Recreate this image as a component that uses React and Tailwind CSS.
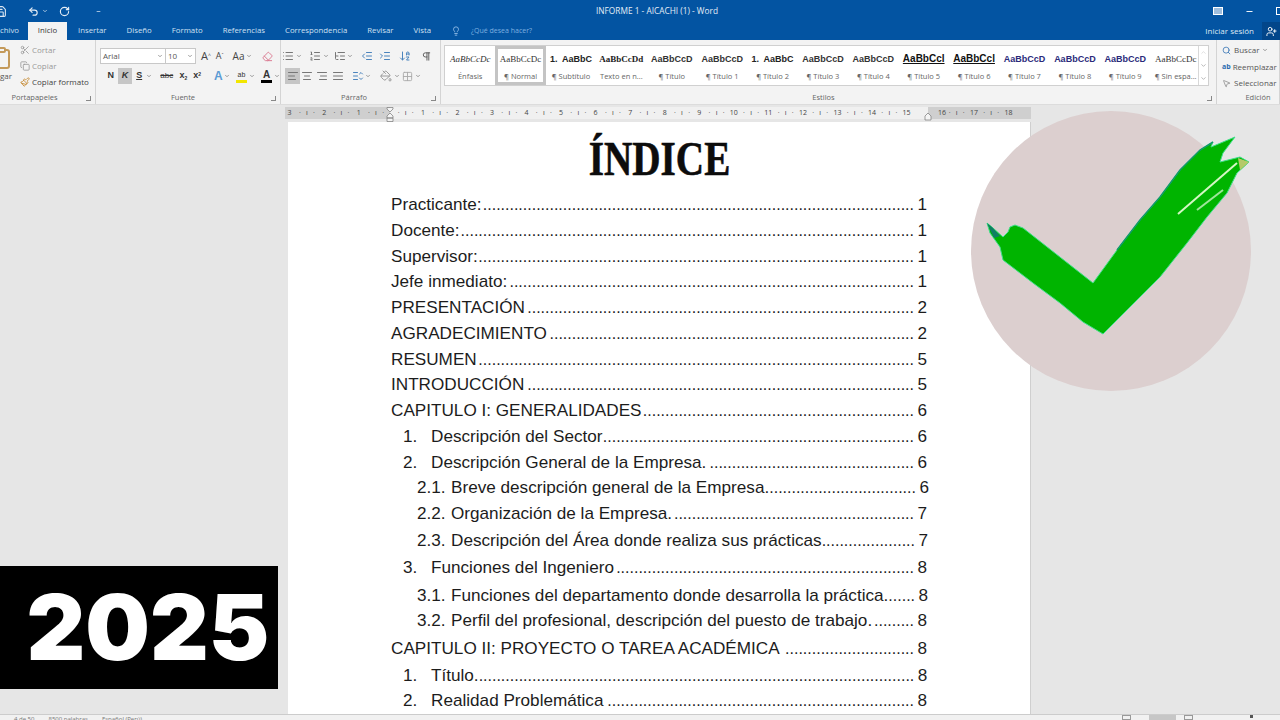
import React from 'react';
import {
  Scissors, Copy, Paintbrush, Clipboard, Undo2, RotateCw, List, ListOrdered, ListTree, IndentDecrease,
  IndentIncrease, ArrowDownAZ, Pilcrow, AlignLeft, AlignCenter, AlignRight, AlignJustify, Search,
  MousePointer2, Lightbulb, UserPlus, Eraser, PaintBucket, Grid2x2, ListChevronsUpDown, Save,
  ChevronDown, ChevronUp, Minus,
} from 'lucide-react';

const tabs = ['Insertar', 'Diseño', 'Formato', 'Referencias', 'Correspondencia', 'Revisar', 'Vista'];

const estilos = [
  { prev: 'AaBbCcDc', label: 'Énfasis', cls: 'italic font-["Liberation_Serif",serif] text-[#333]' },
  { prev: 'AaBbCcDc', label: '¶ Normal', cls: 'font-["Liberation_Serif",serif] text-[#333]', sel: true },
  { prev: '1.  AaBbC', label: '¶ Subtítulo', cls: 'font-bold text-[#222]' },
  { prev: 'AaBbCcDd', label: 'Texto en n...', cls: 'font-bold font-["Liberation_Serif",serif] text-[#222]' },
  { prev: 'AaBbCcD', label: '¶ Título', cls: 'font-bold text-[#333]' },
  { prev: 'AaBbCcD', label: '¶ Título 1', cls: 'font-bold text-[#333]' },
  { prev: '1.  AaBbC', label: '¶ Título 2', cls: 'font-bold text-[#222]' },
  { prev: 'AaBbCcD', label: '¶ Título 3', cls: 'font-bold text-[#333]' },
  { prev: 'AaBbCcD', label: '¶ Título 4', cls: 'font-bold text-[#333]' },
  { prev: 'AaBbCcl', label: '¶ Título 5', cls: 'font-bold underline text-[#111]', big: true },
  { prev: 'AaBbCcl', label: '¶ Título 6', cls: 'font-bold underline text-[#111]', big: true },
  { prev: 'AaBbCcD', label: '¶ Título 7', cls: 'font-bold text-[#2a2a7a]' },
  { prev: 'AaBbCcD', label: '¶ Título 8', cls: 'font-bold text-[#2a2a7a]' },
  { prev: 'AaBbCcD', label: '¶ Título 9', cls: 'font-bold text-[#2a2a7a]' },
  { prev: 'AaBbCcDc', label: '¶ Sin espa...', cls: 'font-["Liberation_Serif",serif] text-[#333]' },
];

// d = cantidad de puntos de la linea guia
const indice = [
  { t: 'Practicante:', p: 1, d: 97 },
  { t: 'Docente:', p: 1, d: 102 },
  { t: 'Supervisor:', p: 1, d: 98 },
  { t: 'Jefe inmediato:', p: 1, d: 91 },
  { t: 'PRESENTACIÓN', p: 2, d: 87 },
  { t: 'AGRADECIMIENTO', p: 2, d: 82 },
  { t: 'RESUMEN', p: 5, d: 98 },
  { t: 'INTRODUCCIÓN', p: 5, d: 87 },
  { t: 'CAPITULO I: GENERALIDADES', p: 6, d: 61 },
  { n: '1.', t: 'Descripción del Sector', p: 6, lv: 1, d: 70 },
  { n: '2.', t: 'Descripción General de la Empresa.', p: 6, lv: 1, d: 46 },
  { n: '2.1.', t: 'Breve descripción general de la Empresa.', p: 6, lv: 2, d: 33 },
  { n: '2.2.', t: 'Organización de la Empresa.', p: 7, lv: 2, d: 54, tall: true },
  { n: '2.3.', t: 'Descripción del Área donde realiza sus prácticas', p: 7, lv: 2, d: 21, tall: true },
  { n: '3.', t: 'Funciones del Ingeniero', p: 8, lv: 1, d: 67, tall: true },
  { n: '3.1.', t: 'Funciones del departamento donde desarrolla la práctica.', p: 8, lv: 2, d: 6 },
  { n: '3.2.', t: 'Perfil del profesional, descripción del puesto de trabajo.', p: 8, lv: 2, d: 9, tall: true },
  { t: 'CAPITULO II: PROYECTO O TAREA ACADÉMICA', p: 8, d: 29, tall: true },
  { n: '1.', t: 'Título.', p: 8, lv: 1, d: 98 },
  { n: '2.', t: 'Realidad Problemática', p: 8, lv: 1, d: 69 },
];

const Group = ({ label, width, labelPad = '', launcher = true, children }) => (
  <div className={`relative h-full shrink-0 border-r border-[#d4d4d4] flex flex-col ${width}`}>
    <div className="flex-1 min-h-0">{children}</div>
    <div className={`h-[11px] mb-[1px] flex items-center justify-center text-[7.5px] text-[#666] ${labelPad}`}>{label}</div>
    {launcher && <div className="absolute right-[4px] bottom-[3px] w-[5px] h-[5px] border-r border-b border-[#888]"></div>}
  </div>
);

const Caret = ({ className = '' }) => <ChevronDown size={6} strokeWidth={2.5} className={`text-[#666] shrink-0 ${className}`} />;

const RulerCell = ({ n, rev }) => (
  <div className={`w-[34.55px] shrink-0 flex items-center justify-around text-[7px] text-[#444] ${rev ? 'flex-row-reverse' : ''}`}>
    <span>·</span>
    <span>ı</span>
    <span>·</span>
    <span className="w-[8px] text-center">{n}</span>
  </div>
);

const TocRow = ({ item }) => (
  <div className={`flex items-baseline justify-between text-[17.15px] leading-[25px] text-[#1c1c1c] whitespace-pre ${item.tall ? 'h-[27.2px]' : 'h-[25.75px]'}`}>
    {item.lv === 1 && <span className="pl-[12px] w-[40px] shrink-0">{item.n}</span>}
    {item.lv === 2 && <span className="pl-[26px] w-[60px] shrink-0">{item.n}</span>}
    <span className="shrink-0">{item.t}</span>
    <span className="flex-1"></span>
    <span className="shrink-0 text-[16px]">{'.'.repeat(item.d)}</span>
    <span className="shrink-0 w-[13px] text-right">{item.p}</span>
  </div>
);

export default function App() {
  return (
    <div className="relative w-[1280px] h-[720px] overflow-hidden flex flex-col bg-[#e6e6e6] font-['Open_Sans',sans-serif]">
      {/* barra de titulo */}
      <div className="relative h-[22px] shrink-0 bg-[#0354a2] flex items-center text-white">
        <Save size={13} className="-ml-[6px] text-[#dbe6f2]" />
        <Undo2 size={11} strokeWidth={2.5} className="ml-[21px] text-[#e6eef6]" />
        <Caret className="ml-[3px] text-white" />
        <RotateCw size={11} strokeWidth={2.5} className="ml-[11px] text-[#e6eef6]" />
        <Minus size={5} strokeWidth={3} className="ml-[26px]" />
        <div className="flex-1 text-center text-[8.3px] px-[30px] text-[#e4edf6]">INFORME 1 - AICACHI (1) - Word</div>
        <div className="w-[10px] h-[8px] border border-white bg-[#9fbedd] mr-[22px]"></div>
        <Minus size={9} strokeWidth={2.5} className="mr-[22px]" />
        <div className="w-[8px] h-[8px] border border-white -mr-[4px]"></div>
      </div>

      {/* pestañas */}
      <div className="h-[18px] shrink-0 bg-[#0354a2] flex items-center text-[7.8px] text-[#cfe0f2]">
        <span className="w-[19px] flex justify-end shrink-0">
          <span className="shrink-0">chivo</span>
        </span>
        <div className="ml-[9px] w-[39px] h-full bg-[#f3f3f3] text-[#333] flex items-center justify-center shrink-0">Inicio</div>
        <div className="ml-[11px] flex gap-[20px]">
          {tabs.map((tab) => <span key={tab}>{tab}</span>)}
        </div>
        <Lightbulb size={10} className="ml-[20px] text-[#9cc3ea]" />
        <span className="ml-[10px] text-[7px] text-[#7fb0e0]">¿Qué desea hacer?</span>
        <div className="flex-1"></div>
        <span className="text-[8px] text-[#dfeaf5]">Iniciar sesión</span>
        <div className="ml-[8px] w-[18px] h-full bg-[#02468a] flex items-center justify-center">
          <UserPlus size={11} className="text-white" />
        </div>
      </div>

      {/* cinta */}
      <div className="h-[65px] shrink-0 bg-[#f3f3f3] border-b border-[#dcdcdc] flex text-[8px] text-[#555]">
        <Group label="Portapapeles" width="w-[96px]" labelPad="pr-[26px]">
          <div className="flex h-full pt-[1px]">
            <div className="w-[20px] shrink-0 overflow-hidden pt-[5px]">
              <Clipboard size={24} className="-ml-[11px] text-[#c49a5a]" />
              <div className="text-[8px] leading-[10px] mt-[1px]">gar</div>
            </div>
            <div className="flex flex-col pt-[1px]">
              <div className="h-[16px] flex items-center gap-[2px] text-[#999]"><Scissors size={10} />Cortar</div>
              <div className="h-[16px] flex items-center gap-[2px] text-[#999]"><Copy size={10} />Copiar</div>
              <div className="h-[16px] flex items-center gap-[2px] text-[#444] whitespace-nowrap"><Paintbrush size={10} className="text-[#c4872c]" />Copiar formato</div>
            </div>
          </div>
        </Group>

        <Group label="Fuente" width="w-[185px]" labelPad="pr-[10px]">
          <div className="pt-[7px] pl-[4px]">
            <div className="h-[18px] flex items-center">
              <div className="w-[66px] h-[16px] border border-[#c8c8c8] bg-white flex items-center justify-between px-[2px] text-[8px]">Arial<Caret /></div>
              <div className="w-[30px] h-[16px] border border-l-0 border-[#c8c8c8] bg-white flex items-center justify-between px-[2px] text-[8px]">10<Caret /></div>
              <span className="ml-[5px] text-[11px] text-[#444]">A<sup className="text-[5px]">^</sup></span>
              <span className="ml-[5px] text-[9px] text-[#444]">A<sup className="text-[5px]">ˇ</sup></span>
              <span className="ml-[9px] text-[10px] text-[#444]">Aa</span>
              <Caret className="ml-[2px]" />
              <Eraser size={11} className="ml-[10px] text-[#d9748c]" />
            </div>
            <div className="h-[18px] mt-[2px] flex items-center text-[#333] font-['Liberation_Sans',sans-serif] text-[9px]">
              <span className="ml-[4px] w-[14px] text-center font-bold">N</span>
              <span className="w-[15px] h-[16px] bg-[#c6c6c6] flex items-center justify-center italic font-bold">K</span>
              <span className="w-[14px] text-center font-bold underline">S</span>
              <Caret />
              <span className="ml-[6px] w-[18px] text-center line-through text-[8px]">abc</span>
              <span className="ml-[1px] w-[14px] text-center font-bold">x<sub className="text-[5px]">2</sub></span>
              <span className="w-[14px] text-center font-bold">x<sup className="text-[5px]">2</sup></span>
              <span className="ml-[10px] text-[12px] font-bold text-[#5b9bd5]">A</span>
              <Caret className="ml-[1px]" />
              <span className="ml-[6px] w-[12px] h-[13px] text-center text-[7px] leading-[9px] border-b-[3px] border-[#f2e600]">ab</span>
              <Caret className="ml-[2px]" />
              <span className="ml-[6px] w-[11px] h-[13px] text-center text-[10px] leading-[10px] font-bold border-b-[3px] border-black">A</span>
              <Caret className="ml-[2px]" />
            </div>
          </div>
        </Group>

        <Group label="Párrafo" width="w-[160px]" labelPad="pr-[13px]">
          <div className="pt-[7px] pl-[4px] text-[#777]">
            <div className="h-[18px] flex items-center -ml-[4px] pl-[1px]">
              <List size={12} /><Caret className="ml-[2px]" />
              <ListOrdered size={12} className="ml-[7px]" /><Caret className="ml-[2px]" />
              <ListTree size={12} className="ml-[5px]" /><Caret className="ml-[1px]" />
              <IndentDecrease size={12} className="ml-[8px] text-[#4b84bd]" />
              <IndentIncrease size={12} className="ml-[6px] text-[#4b84bd]" />
              <ArrowDownAZ size={12} className="ml-[8px] text-[#4b84bd]" />
              <Pilcrow size={11} className="ml-[10px] text-[#555]" />
            </div>
            <div className="h-[18px] mt-[2px] flex items-center">
              <div className="w-[15px] h-[16px] bg-[#c6c6c6] flex items-center justify-center"><AlignLeft size={12} /></div>
              <AlignCenter size={12} className="ml-[1px]" />
              <AlignRight size={12} className="ml-[3px]" />
              <AlignJustify size={12} className="ml-[4px]" />
              <ListChevronsUpDown size={12} className="ml-[8px] text-[#4b84bd]" /><Caret className="ml-[1px]" />
              <PaintBucket size={12} className="ml-[9px] text-[#999]" /><Caret className="ml-[2px]" />
              <Grid2x2 size={11} className="ml-[2px] text-[#aaa]" /><Caret className="ml-[2px]" />
            </div>
          </div>
        </Group>

        <Group label="Estilos" width="w-[776px]" labelPad="pr-[10px]">
          <div className="ml-[3px] mt-[5px] h-[41px] w-[765px] bg-white border border-[#d0d0d0] flex">
            <div className="flex-1 flex overflow-hidden">
              {estilos.map((e) => (
                <div
                  key={e.label}
                  className={`w-[50.4px] shrink-0 flex flex-col items-center gap-[8px] font-['Liberation_Sans',sans-serif] ${e.sel ? 'border-[3px] border-[#c4c4c4] pt-[5px]' : 'pt-[8px]'}`}
                >
                  <span className={`w-full text-center whitespace-pre leading-[10px] ${e.big ? 'text-[10px]' : 'text-[9px]'} ${e.cls}`}>{e.prev}</span>
                  <span className="whitespace-nowrap text-[7.5px] leading-[9px] text-[#666] font-['Open_Sans',sans-serif]">{e.label}</span>
                </div>
              ))}
            </div>
            <div className="w-[10px] shrink-0 border-l border-[#d8d8d8] flex flex-col items-center justify-around text-[#888]">
              <ChevronUp size={7} className="text-[#ccc]" />
              <ChevronDown size={7} />
              <ChevronDown size={7} />
            </div>
          </div>
        </Group>

        <Group label="Edición" width="w-[63px]" labelPad="pl-[20px]" launcher={false}>
          <div className="pl-[5px] pt-[2px] flex flex-col whitespace-nowrap text-[#555]">
            <div className="h-[16px] flex items-center gap-[3px]"><Search size={9} className="text-[#2b6cb0]" />Buscar<Caret /></div>
            <div className="h-[17px] flex items-center gap-[2px]"><span className="text-[7px] leading-[7px] text-[#2b6cb0] font-bold">ab</span>Reemplazar</div>
            <div className="h-[16px] flex items-center gap-[3px]"><MousePointer2 size={9} className="text-[#888]" />Seleccionar</div>
          </div>
        </Group>
      </div>

      {/* regla */}
      <div className="relative mt-[2px] h-[12px] shrink-0 flex">
        <div className="ml-[285px] w-[105px] bg-[#cfcfcf] flex">
          <div className="-ml-[2px] flex">
            {['3', '2', '1'].map((n) => <RulerCell key={n} n={n} rev />)}
          </div>
        </div>
        <div className="w-[538px] bg-[#f0f0f0] flex pl-[5px]">
          {[1, 2, 3, 4, 5, 6, 7, 8, 9, 10, 11, 12, 13, 14, 15].map((n) => <RulerCell key={n} n={n} />)}
        </div>
        <div className="w-[103px] bg-[#cfcfcf] flex pl-[10px]">
          <span className="w-[8px] shrink-0 self-center text-center text-[7px] text-[#444]">16</span>
          {[17, 18].map((n) => <RulerCell key={n} n={n} />)}
        </div>
        {/* sangrias */}
        <svg className="absolute left-[386px] top-0" width="8" height="15" viewBox="0 0 8 15">
          <path d="M1 0.5 H7 V2 L4 5 L1 2 Z M1 9 L4 6 L7 9 V11 H1 Z M1 11 H7 V14.5 H1 Z" fill="#f4f4f4" stroke="#777" strokeWidth="0.7" />
        </svg>
        <svg className="absolute left-[924px] top-[5px]" width="8" height="9" viewBox="0 0 8 9">
          <path d="M1 4 L4 1 L7 4 V8 H1 Z" fill="#f4f4f4" stroke="#777" strokeWidth="0.7" />
        </svg>
      </div>

      {/* documento */}
      <div className="flex-1 min-h-0 flex pt-[3px]">
        <div className="ml-[288px] w-[743px] h-full bg-white border-r border-[#cfcfcf] px-[103px] overflow-hidden font-['Liberation_Sans',sans-serif]">
          <div className="h-[70px] flex items-center justify-center pt-[3px] pl-[1px]">
            <h1 className="inline-block scale-x-[0.8] text-[49px] leading-none font-bold text-[#0c0c0c] font-['Liberation_Serif',serif] [-webkit-text-stroke:0.6px_#0c0c0c]">ÍNDICE</h1>
          </div>
          {indice.map((item) => <TocRow key={item.n + item.t} item={item} />)}
        </div>
      </div>

      {/* barra de estado */}
      <div className="h-[6px] shrink-0 bg-[#f1f1f1] border-t border-[#cccccc] overflow-hidden flex text-[6px] leading-[8px] text-[#777]">
        <span className="ml-[14px]">4 de 50</span>
        <span className="ml-[14px]">8500 palabras</span>
        <span className="ml-[14px]">Español (Perú)</span>
        <div className="flex-1"></div>
        <div className="w-[9px] h-[5px] border border-[#999] mr-[18px]"></div>
        <div className="w-[27px] h-[5px] bg-[#c6c6c6] mr-[8px]"></div>
        <div className="w-[9px] h-[5px] border border-[#999] mr-[57px]"></div>
        <div className="w-[3px] h-[3px] bg-[#555] mr-[27px]"></div>
      </div>

      {/* sello 2025 */}
      <div className="absolute left-0 top-[566px] w-[278px] h-[123px] bg-black flex items-center justify-center pl-[18px] text-[91px] leading-none font-black text-white font-['Inter',sans-serif]">
        2025
      </div>

      {/* circulo con check */}
      <svg className="absolute left-[970px] top-[110px] overflow-visible" width="282" height="282" viewBox="970 110 282 282">
        <circle cx="1111" cy="251" r="140" fill="#dccfcf" />
        <path
          d="M987 223 L993 228 L1003 237 L1008 232 L1010 227 L1015 225 L1023 228 L1093 283 L1117 250 L1140 220 L1160 197 L1180 170 L1200 150 L1213 142 L1211 147 L1235 137 L1223 153 L1220 162 L1240 157 L1249 162 L1237 173 L1227 193 L1207 217 L1187 243 L1160 277 L1140 297 L1103 334 L1083 322 L1060 303 L1033 283 L1003 260 L1000 247 L990 233 Z"
          fill="#00b400"
          stroke="#3fe08a"
          strokeWidth="1"
          strokeLinejoin="round"
        />
        <path d="M1178 214 L1237 163" stroke="#d4f7c4" strokeWidth="2" fill="none" />
        <path d="M1197 210 L1223 190" stroke="#9fe59a" strokeWidth="2" fill="none" />
        <path d="M1117 250 L1140 220 L1160 197 L1180 170 L1200 150 L1213 142" stroke="#109a6a" strokeWidth="1.5" fill="none" />
        <path d="M1238 158 L1249 162 L1240 170 Z" fill="#b5c96a" />
        <path d="M987 223 L993 228 L1000 236 L994 238 Z" fill="#0f7f62" />
      </svg>
    </div>
  );
}
